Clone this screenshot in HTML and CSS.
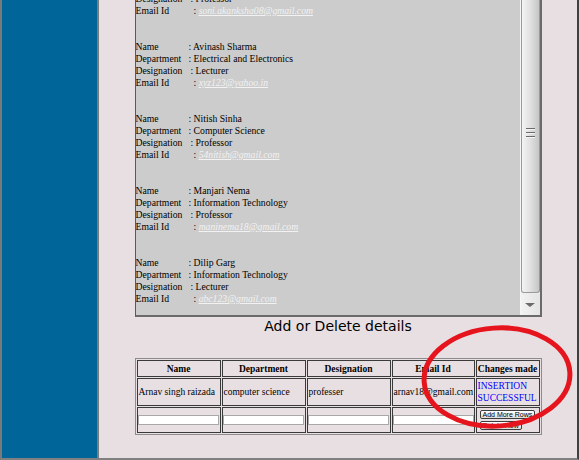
FILE: index.html
```html
<!DOCTYPE html>
<html>
<head>
<meta charset="utf-8">
<title>Faculty details</title>
<link rel="stylesheet" href="styles.css">
</head>
<body>
<div class="frame">
  <div class="sidebar"></div>
  <div class="main">
    <div class="box">
      <div class="list">
        <div class="entry first">
          <div><span class="k k-des">Designation</span>: Professor</div>
          <div><span class="k k-mail">Email Id</span>: <a href="#">soni.akanksha08@gmail.com</a></div>
        </div>
        <div class="entry">
          <div><span class="k">Name</span>: Avinash Sharma</div>
          <div><span class="k">Department</span>: Electrical and Electronics</div>
          <div><span class="k k-des">Designation</span>: Lecturer</div>
          <div><span class="k k-mail">Email Id</span>: <a href="#">xyz123@yahoo.in</a></div>
        </div>
        <div class="entry">
          <div><span class="k">Name</span>: Nitish Sinha</div>
          <div><span class="k">Department</span>: Computer Science</div>
          <div><span class="k k-des">Designation</span>: Professor</div>
          <div><span class="k k-mail">Email Id</span>: <a href="#">54nitish@gmail.com</a></div>
        </div>
        <div class="entry">
          <div><span class="k">Name</span>: Manjari Nema</div>
          <div><span class="k">Department</span>: Information Technology</div>
          <div><span class="k k-des">Designation</span>: Professor</div>
          <div><span class="k k-mail">Email Id</span>: <a href="#">maninema18@gmail.com</a></div>
        </div>
        <div class="entry">
          <div><span class="k">Name</span>: Dilip Garg</div>
          <div><span class="k">Department</span>: Information Technology</div>
          <div><span class="k k-des">Designation</span>: Lecturer</div>
          <div><span class="k k-mail">Email Id</span>: <a href="#">abc123@gmail.com</a></div>
        </div>
      </div>
      <div class="scroll">
        <div class="thumb"><div class="grip"><i></i><i></i><i></i></div></div>
        <div class="down"><span class="tri"></span></div>
      </div>
    </div>
    <div class="title">Add or Delete details</div>
    <table class="grid">
      <tr>
        <th class="c-w">Name</th>
        <th class="c-w">Department</th>
        <th class="c-w">Designation</th>
        <th class="c-m">Email Id</th>
        <th class="c-s">Changes made</th>
      </tr>
      <tr class="row-data">
        <td>Arnav singh raizada</td>
        <td>computer science</td>
        <td>professer</td>
        <td>arnav18@gmail.com</td>
        <td class="ok">INSERTION<br>SUCCESSFUL</td>
      </tr>
      <tr class="row-new">
        <td><input type="text" class="field"></td>
        <td><input type="text" class="field"></td>
        <td><input type="text" class="field"></td>
        <td><input type="text" class="field"></td>
        <td><div class="actions"><button class="btn">Add More Rows</button><button class="btn">Delete Row</button></div></td>
      </tr>
    </table>
  </div>
</div>
<svg class="mark" width="579" height="460" viewBox="0 0 579 460">
  <ellipse cx="497" cy="377" rx="73" ry="49" transform="rotate(-4 497 377)" fill="none" stroke="#e5141d" stroke-width="5"/>
</svg>
</body>
</html>
```
FILE: styles.css
```css
html, body {
  margin: 0;
  padding: 0;
}
body {
  width: 579px;
  height: 460px;
  overflow: hidden;
  position: relative;
  background: #e8dfe2;
}
.frame {
  display: flex;
  height: 460px;
}
.sidebar {
  width: 99px;
  box-sizing: border-box;
  background: #006699;
  border-left: 2px solid #7a7a7a;
  border-right: 2px solid #7c7c7c;
  border-bottom: 2px solid #808080;
}
.main {
  flex: 1;
  box-sizing: border-box;
  background: #e8dfe2;
  border-right: 2px solid #404040;
  border-bottom: 2px solid #808080;
  display: flex;
  flex-direction: column;
  align-items: center;
}
.box {
  width: 407px;
  height: 317px;
  box-sizing: border-box;
  display: flex;
  background: #cccccc;
  border-left: 1px solid #5a5a5a;
  border-right: 2px solid #6a6a6a;
  border-bottom: 2px solid #6a6a6a;
}
.list {
  flex: 1;
  overflow: hidden;
  font: 9.7px/12px "Liberation Serif", serif;
  color: #000;
  white-space: nowrap;
}
.entry {
  margin-top: 24px;
}
.entry.first {
  margin-top: -7px;
}
.k {
  display: inline-block;
  width: 53px;
}
.k-des {
  width: 55px;
}
.k-mail {
  width: 58px;
}
.list a {
  color: #f2f2f2;
  font-style: italic;
  text-decoration: underline;
}
.scroll {
  width: 19px;
  display: flex;
  flex-direction: column;
  background: #ececec;
  border-left: 1px solid #f6f6f6;
}
.thumb {
  flex: 1;
  margin-bottom: 1px;
  box-sizing: border-box;
  border: 1px solid #9a9a9a;
  border-top: none;
  border-radius: 0 0 3px 3px;
  background: linear-gradient(to right, #f4f4f4, #e2e2e2 45%, #c6c6c6);
  display: flex;
  flex-direction: column;
  align-items: center;
  padding-top: 128px;
}
.grip {
  display: flex;
  flex-direction: column;
  gap: 2px;
}
.grip i {
  display: block;
  width: 9px;
  height: 1px;
  background: #6a6a6a;
  border-bottom: 1px solid #f4f4f4;
}
.down {
  height: 21px;
  display: flex;
  align-items: center;
  justify-content: center;
  background: linear-gradient(to right, #f2f2f2, #e4e4e4);
}
.tri {
  width: 0;
  height: 0;
  border-left: 5px solid transparent;
  border-right: 5px solid transparent;
  border-top: 4px solid #6a6a6a;
}
.title {
  font: 14px/18px "DejaVu Sans", Verdana, sans-serif;
  color: #000;
  text-align: center;
  margin-bottom: 23px;
}
.grid {
  width: 407px;
  table-layout: fixed;
  border: 1px solid #8c8c8c;
  border-spacing: 1px;
  font: 9.5px/12px "Liberation Serif", serif;
  color: #000;
}
.grid th, .grid td {
  box-sizing: border-box;
  border: 1px solid #3a3a3a;
  padding: 1px;
  vertical-align: middle;
  white-space: nowrap;
  overflow: visible;
}
.grid th {
  font-weight: bold;
  text-align: center;
  padding: 2px 1px 1px;
}
.grid td {
  text-align: left;
}
.c-w { width: 84px; }
.c-m { width: 83px; }
.c-s { width: 64px; }
.ok {
  color: #0000ff;
}
.row-new td {
  height: 26px;
  padding: 0;
}
.field {
  display: block;
  width: 81px;
  height: 10px;
  box-sizing: border-box;
  margin: 0;
  padding: 0;
  border: 1px solid #a8a8a8;
  background: #fff;
  font-size: 7px;
}
.actions {
  display: flex;
  flex-direction: column;
  align-items: flex-start;
  gap: 2px;
  padding-left: 3px;
}
.btn {
  height: 9px;
  box-sizing: border-box;
  margin: 0;
  padding: 0 2px;
  border: 1px solid #3c3c3c;
  border-radius: 2px;
  background: linear-gradient(#ffffff, #dcdcdc);
  font: 7px/7px "Liberation Sans", Arial, sans-serif;
  color: #000;
  white-space: nowrap;
}
.mark {
  position: absolute;
  left: 0;
  top: 0;
  pointer-events: none;
}
```
